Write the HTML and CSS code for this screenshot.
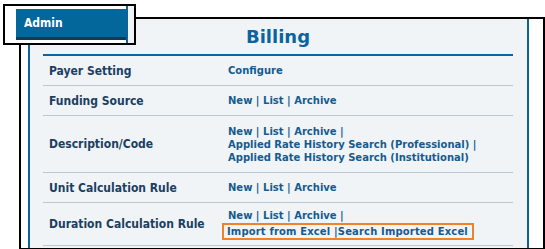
FILE: index.html
```html
<!DOCTYPE html>
<html>
<head>
<meta charset="utf-8">
<link rel="stylesheet" href="styles.css">
</head>
<body>
<div class="frame">
  <div class="panel">
    <h1 class="title">Billing</h1>
    <div class="table">
      <div class="row r30">
        <div class="label">Payer Setting</div>
        <div class="links"><a>Configure</a></div>
      </div>
      <div class="row r30">
        <div class="label">Funding Source</div>
        <div class="links"><a>New</a> | <a>List</a> | <a>Archive</a></div>
      </div>
      <div class="row r57">
        <div class="label">Description/Code</div>
        <div class="links">
          <div><a>New</a> | <a>List</a> | <a>Archive</a> |</div>
          <div><a>Applied Rate History Search (Professional)</a> |</div>
          <div><a>Applied Rate History Search (Institutional)</a></div>
        </div>
      </div>
      <div class="row r30">
        <div class="label">Unit Calculation Rule</div>
        <div class="links"><a>New</a> | <a>List</a> | <a>Archive</a></div>
      </div>
      <div class="row r43">
        <div class="label">Duration Calculation Rule</div>
        <div class="links">
          <div><a>New</a> | <a>List</a> | <a>Archive</a> |</div>
          <div><span class="highlight"><a>Import from Excel</a> |<a>Search Imported Excel</a></span></div>
        </div>
      </div>
    </div>
  </div>
</div>
<div class="admin">
  <div class="admin-tab">Admin</div>
  <div class="admin-edge"></div>
</div>
</body>
</html>
```
FILE: styles.css
```css
html, body {
  margin: 0;
  padding: 0;
  background: #ffffff;
}
body {
  width: 545px;
  height: 249px;
  overflow: hidden;
  position: relative;
  font-family: "DejaVu Sans Condensed", "DejaVu Sans", sans-serif;
  font-stretch: condensed;
}
.frame {
  margin: 17px 0 0 19px;
  height: 229px;
  width: 501px;
  border: 2px solid #000;
  padding-left: 7px;
  padding-right: 14px;
  box-sizing: content-box;
}
.panel {
  background: #f0f4f7;
  border-left: 2px solid #0e6199;
  border-right: 2px solid #0e6199;
  height: 100%;
  padding: 0 14px 0 13px;
  box-sizing: border-box;
}
.title {
  margin: 0;
  padding-top: 7px;
  height: 28px;
  border-bottom: 2px solid #0a64a0;
  text-align: center;
  font-family: "DejaVu Sans", sans-serif;
  font-stretch: normal;
  font-size: 18px;
  font-weight: bold;
  line-height: 22px;
  color: #0a64a0;
}
.row {
  display: flex;
  align-items: center;
  border-bottom: 1px solid #b7c7d4;
  box-sizing: border-box;
}
.r30 { height: 30px; }
.r57 { height: 57px; }
.r43 { height: 43px; }
.label {
  width: 179px;
  padding-left: 6px;
  font-size: 12px;
  font-weight: bold;
  color: #1b3f63;
}
.links {
  font-family: "DejaVu Sans", sans-serif;
  font-stretch: normal;
  font-size: 10px;
  font-weight: bold;
  color: #165b8e;
  line-height: 13px;
}
.links a {
  color: #165b8e;
}
.highlight {
  display: inline-block;
  margin-left: -6px;
  margin-top: 1px;
  padding: 0 4px 0 3px;
  border: 2px solid #f0832a;
  line-height: 13px;
  letter-spacing: 0.15px;
}
.admin {
  position: absolute;
  left: 3px;
  top: 4px;
  width: 133px;
  height: 41px;
  border: 2px solid #000;
  background: #ffffff;
  display: flex;
  align-items: flex-start;
  padding-left: 11px;
  box-sizing: border-box;
}
.admin-tab {
  margin-top: 3px;
  width: 102px;
  height: 28px;
  border-bottom: 3px solid #0a3d5c;
  background: #03679c;
  color: #ffffff;
  font-size: 12px;
  font-weight: bold;
  line-height: 28px;
  padding-left: 8px;
  box-sizing: content-box;
}
.admin-edge {
  align-self: stretch;
  flex: 1;
  border-left: 2px solid #0e6199;
  background: #f0f4f7;
}
```
